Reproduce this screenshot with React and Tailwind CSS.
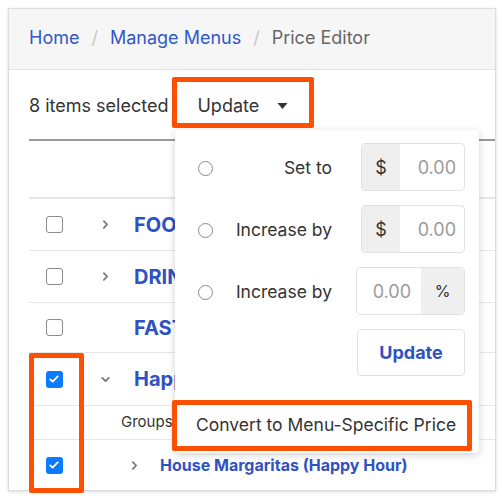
const Checkbox = ({ checked = false }) =>
  checked ? (
    <span className="flex h-[17px] w-[17px] items-center justify-center rounded-[3px] bg-[#0a7cff]">
      <svg viewBox="0 0 16 16" className="h-[12px] w-[12px]" fill="none">
        <path d="M3 8.5l3.2 3L13 4.5" stroke="white" strokeWidth="2.4" strokeLinecap="round" strokeLinejoin="round" />
      </svg>
    </span>
  ) : (
    <span className="block h-[17px] w-[17px] rounded-[3px] border-[1.5px] border-[#8a8a8a] bg-white" />
  );

const Chevron = ({ down = false }) => (
  <svg viewBox="0 0 10 10" className="h-[11px] w-[11px]" fill="none">
    <path
      d={down ? "M2 3.5l3 3 3-3" : "M3.5 2l3 3-3 3"}
      stroke="#777"
      strokeWidth="1.6"
      strokeLinecap="round"
      strokeLinejoin="round"
    />
  </svg>
);

const Radio = () => (
  <span className="block h-[15px] w-[15px] rounded-full border-[1.5px] border-[#8a8a8a] bg-white" />
);

const Row = ({ name, checked, down, className = "h-[52px]" }) => (
  <div className={`flex items-center border-b border-[#e6e6e6] ${className}`}>
    <div className="flex w-[50px] justify-center">
      <Checkbox checked={checked} />
    </div>
    <div className="flex w-[55px] pl-[21px]">{down !== undefined && <Chevron down={down} />}</div>
    <span className="whitespace-nowrap text-[20px] font-bold text-[#2f52c2]">{name}</span>
  </div>
);

const PriceRow = ({ label, unit, suffix }) => (
  <div className="flex h-[48px] items-center">
    <div className="flex w-[45px] justify-start pl-[23px] pt-[2px]">
      <Radio />
    </div>
    <div className="w-[112px] whitespace-nowrap pt-[2px] text-right text-[17.5px] text-[#333]">{label}</div>
    {suffix ? (
      <div className="ml-[24px] flex h-[48px] w-[109px] overflow-hidden rounded-[4px] border border-[#e2e2e2]">
        <div className="flex flex-1 items-center justify-end pr-[10px] text-[18px] text-[#9a9a9a]">0.00</div>
        <div className="flex w-[43px] items-center justify-center bg-[#efefef] text-[16px] text-[#333]">%</div>
      </div>
    ) : (
      <div className="ml-[29px] flex h-[48px] w-[104px] overflow-hidden rounded-[4px] border border-[#e2e2e2]">
        <div className="flex w-[38px] items-center justify-center bg-[#efefef] text-[18px] text-[#333]">{unit}</div>
        <div className="flex flex-1 items-center justify-end pr-[8px] text-[18px] text-[#9a9a9a]">0.00</div>
      </div>
    )}
  </div>
);

export default function App() {
  return (
    <div className="relative h-[498px] w-[502px] overflow-hidden bg-white font-['Inter','Liberation_Sans',sans-serif]">
      <div className="absolute left-[8px] top-[8px] flex h-[483px] w-[488px] flex-col overflow-hidden border border-[#dcdcdc] shadow-[0_1px_3px_rgba(0,0,0,0.15)]">
        <div className="flex h-[61px] shrink-0 items-center gap-[12px] border-b border-[#e2e2e2] bg-[#f6f6f6] pb-[4px] pl-[20px] text-[18px]">
          <span className="text-[#3258c8]">Home</span>
          <span className="text-[#c8c8c8]">/</span>
          <span className="text-[#3258c8]">Manage Menus</span>
          <span className="text-[#c8c8c8]">/</span>
          <span className="text-[#666]">Price Editor</span>
        </div>
        <div className="flex h-[69px] shrink-0 items-center pl-[20px] pt-[2px] text-[18px] text-[#333]">
          <span>8 items selected</span>
          <span className="ml-[29px]">Update</span>
          <svg viewBox="0 0 10 6" className="ml-[18px] h-[6px] w-[11px]">
            <path d="M0 0h10L5 6z" fill="#333" />
          </svg>
        </div>
        <div className="ml-[20px] flex-1">
          <div className="h-[60px] border-t-2 border-b-2 border-t-[#9a9a9a] border-b-[#e6e6e6]" />
          <Row name="FOOD" down={false} />
          <Row name="DRINKS" down={false} />
          <Row name="FAST FOOD" className="h-[50px]" />
          <Row name="Happy Hour" checked down={true} className="h-[53px]" />
          <div className="flex h-[34px] items-center border-b border-[#e6e6e6] pl-[92px] text-[15px] text-[#333]">
            Groups
          </div>
          <div className="flex h-[50px] items-center">
            <div className="flex w-[50px] justify-center">
              <Checkbox checked />
            </div>
            <div className="flex w-[81px] pl-[50px]">
              <Chevron />
            </div>
            <span className="whitespace-nowrap text-[16px] font-bold text-[#2f52c2]">House Margaritas (Happy Hour)</span>
          </div>
        </div>
      </div>

      <div className="absolute left-[175px] top-[130px] flex h-[323px] w-[304px] flex-col rounded-[4px] bg-white pt-[13px] shadow-[0_2px_8px_rgba(0,0,0,0.18)]">
        <PriceRow label="Set to" unit="$" />
        <div className="h-[14px]" />
        <PriceRow label="Increase by" unit="$" />
        <div className="h-[14px]" />
        <PriceRow label="Increase by" suffix />
        <div className="ml-[182px] mt-[14px] flex h-[47px] w-[108px] items-center justify-center rounded-[4px] border border-[#e2e2e2] text-[18px] font-bold text-[#2f52c2]">
          Update
        </div>
        <div className="mt-[23px] flex h-[52px] items-center whitespace-nowrap pl-[21px] text-[17.5px] text-[#333]">
          Convert to Menu-Specific Price
        </div>
      </div>

      <div className="absolute left-[172px] top-[77px] h-[51px] w-[142px] rounded-[2px] border-[5px] border-[#ff4f00]" />
      <div className="absolute left-[172px] top-[400px] h-[51px] w-[300px] rounded-[2px] border-[5px] border-[#ff4f00]" />
      <div className="absolute left-[29px] top-[353px] h-[140px] w-[55px] rounded-[2px] border-[5px] border-[#ff4f00]" />
    </div>
  );
}
